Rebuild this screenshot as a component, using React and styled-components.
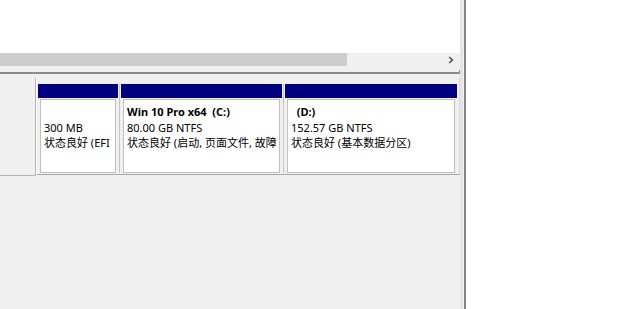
import React from "react";
import styled, { createGlobalStyle } from "styled-components";

const Global = createGlobalStyle`
  html, body { margin: 0; padding: 0; background: #ffffff; }
  body { width: 620px; height: 309px; overflow: hidden; }
  #root { width: 620px; height: 309px; }
`;

const Window = styled.div`
  display: flex;
  width: 620px;
  height: 309px;
  background: #ffffff;
  font-family: "Noto Sans", "Noto Sans CJK SC", sans-serif;
  font-size: 11px;
  color: #000;
`;

const Main = styled.div`
  width: 460px;
  display: flex;
  flex-direction: column;
`;

const Edge = styled.div`
  width: 6px;
  background: linear-gradient(
    to right,
    #e4e4e4 0px, #e4e4e4 3px,
    #f2f2f2 3px, #f2f2f2 4px,
    #858585 4px, #858585 6px
  );
`;

const ListArea = styled.div`
  height: 53px;
  background: #ffffff;
`;

const ScrollBar = styled.div`
  height: 17px;
  background: #f0f0f0;
  display: flex;
  align-items: flex-start;
  justify-content: space-between;
`;

const Thumb = styled.div`
  width: 347px;
  height: 13px;
  background: #cdcdcd;
`;

const ArrowButton = styled.div`
  width: 17px;
  height: 13px;
  display: flex;
  align-items: center;
  justify-content: center;
  margin-right: 1px;
`;

const Separator = styled.div`
  height: 2px;
  background: #f0f0f0;
  border-right: 1px solid #8a8a8a;
`;

const DiskPane = styled.div`
  flex: 1;
  background: #f0f0f0;
  border-top: 2px solid #8a8a8a;
  padding-top: 4px;
`;

const DiskRow = styled.div`
  display: flex;
  align-items: flex-start;
`;

const DiskLabel = styled.div`
  width: 35px;
  height: 97px;
  background: #f0f0f0;
  border-right: 1px solid #b4b4b4;
  border-bottom: 1px solid #b4b4b4;
`;

const PartitionArea = styled.div`
  flex: 1;
  display: flex;
  padding: 6px 2px 1px 1px;
  border-left: 1px solid #ffffff;
  border-right: 1px solid #d8d8d8;
  border-bottom: 1px solid #a8a8a8;
`;

const Partition = styled.div`
  width: ${(p) => p.$w}px;
  display: flex;
  flex-direction: column;
  & + & {
    margin-left: 1px;
    padding-left: 1px;
    border-left: 1px solid #c4c4c4;
  }
`;

const Header = styled.div`
  height: 14px;
  background: #000080;
`;

const Body = styled.div`
  height: 66px;
  margin: 1px 2px 0 2px;
  padding: 4px 3px 2px 3px;
  background: #ffffff;
  border: 1px solid #c0c0c0;
  overflow: hidden;
  display: flex;
  flex-direction: column;
`;

const Line = styled.div`
  height: 15.5px;
  line-height: 15.5px;
  white-space: pre;
  overflow: hidden;
  font-weight: ${(p) => (p.$bold ? 700 : 400)};
`;

const Chevron = () => (
  <svg width="6" height="8" viewBox="0 0 6 8">
    <path d="M1.2 1 L4.4 4 L1.2 7" fill="none" stroke="#505050" strokeWidth="1.6" />
  </svg>
);

const partitions = [
  { w: 80, title: "", size: "300 MB", status: "状态良好 (EFI 系统分区)" },
  { w: 161, title: "Win 10 Pro x64  (C:)", size: "80.00 GB NTFS", status: "状态良好 (启动, 页面文件, 故障转储, 基本数据分区)" },
  { w: 172, title: "  (D:)", size: "152.57 GB NTFS", status: "状态良好 (基本数据分区)" },
];

export default function App() {
  return (
    <>
      <Global />
      <Window>
        <Main>
          <ListArea />
          <ScrollBar>
            <Thumb />
            <ArrowButton>
              <Chevron />
            </ArrowButton>
          </ScrollBar>
          <Separator />
          <DiskPane>
            <DiskRow>
              <DiskLabel />
              <PartitionArea>
                {partitions.map((p, i) => (
                  <Partition key={i} $w={p.w}>
                    <Header />
                    <Body>
                      <Line $bold>{p.title || "\u00a0"}</Line>
                      <Line>{p.size}</Line>
                      <Line>{p.status}</Line>
                    </Body>
                  </Partition>
                ))}
              </PartitionArea>
            </DiskRow>
          </DiskPane>
        </Main>
        <Edge />
      </Window>
    </>
  );
}
